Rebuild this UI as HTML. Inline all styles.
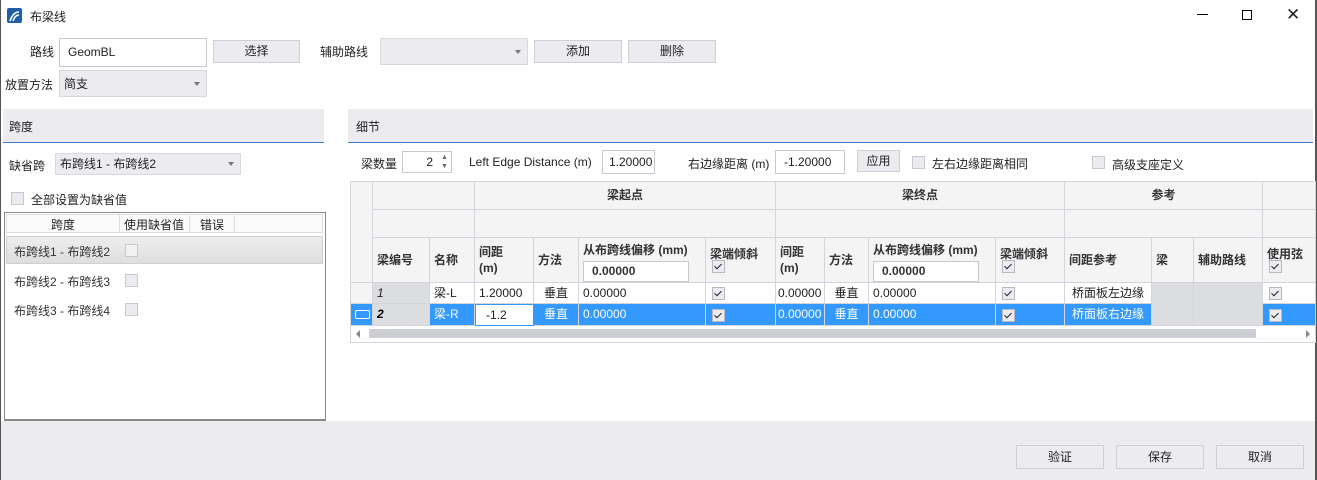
<!DOCTYPE html>
<html><head><meta charset="utf-8"><style>
*{box-sizing:border-box;margin:0;padding:0}
body{width:1317px;height:480px;overflow:hidden;background:#fff;font-family:"Liberation Sans","Noto Sans CJK SC",sans-serif;font-size:12px;color:#222;position:relative}
.a{position:absolute}
.btn{position:absolute;background:#ecebf0;border:1px solid #cfcfd8;text-align:center;color:#222}
.inp{position:absolute;background:#fff;border:1px solid #c8c8d0;padding-left:8px}
.cmb{position:absolute;background:#ecebf0;border:1px solid #d8d8de;padding-left:4px}
.cmb:after{content:"";position:absolute;right:6px;top:50%;margin-top:-2px;border-left:3px solid transparent;border-right:3px solid transparent;border-top:4px solid #777}
.cb{position:absolute;width:13px;height:13px;background:#ecebf0;border:1px solid #c8c8d0}
.ck{position:absolute;width:13px;height:13px;background:#ecebf0;border:1px solid #b8b8c4}
.ck:after{content:"";position:absolute;left:3px;top:1px;width:3px;height:6px;border:solid #222;border-width:0 1.5px 1.5px 0;transform:rotate(45deg)}
.c{position:absolute;border-right:1px solid #d4d4dc;border-bottom:1px solid #d4d4dc;padding:0 4px;white-space:nowrap;overflow:hidden}
.h{background:#f4f4f4;font-weight:bold;color:#333}
.sel{background:#3399ff;color:#fff}
.g{background:#dcdde0}
</style></head><body>
<div class="a" style="left:0;top:0;width:1px;height:480px;background:#555"></div>
<div class="a" style="left:1315px;top:0;width:2px;height:480px;background:#555"></div>
<div class="a" style="left:7px;top:8px;width:15px;height:15px;background:#1f5fa8;border-radius:2px"><svg width="15" height="15"><path d="M3 13 Q6 4 12 4 M6 13 Q8 7 12 7" stroke="#fff" stroke-width="1.6" fill="none"/></svg></div>
<div class="a" style="left:30px;top:8px">布梁线</div>
<div class="a" style="left:1197px;top:14px;width:11px;height:1px;background:#000"></div>
<div class="a" style="left:1242px;top:10px;width:10px;height:10px;border:1px solid #000"></div>
<div class="a" style="left:1286px;top:7px;font-size:17px;line-height:16px">✕</div>

<div class="a" style="left:30px;top:43px">路线</div>
<div class="inp" style="left:59px;top:38px;width:148px;height:29px;line-height:27px">GeomBL</div>
<div class="btn" style="left:213px;top:40px;width:87px;height:23px;line-height:21px">选择</div>
<div class="a" style="left:320px;top:43px">辅助路线</div>
<div class="cmb" style="left:380px;top:38px;width:148px;height:27px"></div>
<div class="btn" style="left:534px;top:40px;width:88px;height:23px;line-height:21px">添加</div>
<div class="btn" style="left:628px;top:40px;width:88px;height:23px;line-height:21px">删除</div>
<div class="a" style="left:5px;top:76px">放置方法</div>
<div class="cmb" style="left:59px;top:70px;width:148px;height:27px;line-height:27px">简支</div>

<div class="a" style="left:3px;top:109px;width:321px;height:34px;background:#ecebf0;border-bottom:1px solid #3d7cc9;padding:9px 6px">跨度</div>
<div class="a" style="left:9px;top:157px">缺省跨</div>
<div class="cmb" style="left:55px;top:153px;width:186px;height:22px;line-height:20px">布跨线1 - 布跨线2</div>
<div class="cb" style="left:11px;top:192px"></div>
<div class="a" style="left:31px;top:191px">全部设置为缺省值</div>
<div class="a" style="left:4px;top:212px;width:322px;height:209px;border:1px solid #888;border-bottom:2px solid #888;background:#fff"></div>
<div class="a" style="left:6px;top:214px;width:317px;height:19px;border:1px solid #ddd;background:#fbfbfb"></div>
<div class="a" style="left:6px;top:216px;width:114px;text-align:center">跨度</div>
<div class="a" style="left:119px;top:214px;width:1px;height:19px;background:#ddd"></div>
<div class="a" style="left:124px;top:216px">使用缺省值</div>
<div class="a" style="left:189px;top:214px;width:1px;height:19px;background:#ddd"></div>
<div class="a" style="left:200px;top:216px">错误</div>
<div class="a" style="left:234px;top:214px;width:1px;height:19px;background:#ddd"></div>
<div class="a" style="left:6px;top:236px;width:317px;height:28px;background:linear-gradient(#eee,#dedede);border:1px solid #d0d0d0"></div>
<div class="a" style="left:14px;top:243px;color:#333">布跨线1 - 布跨线2</div>
<div class="cb" style="left:125px;top:244px;background:#f2f2f2"></div>
<div class="a" style="left:14px;top:273px;color:#333">布跨线2 - 布跨线3</div>
<div class="cb" style="left:125px;top:274px"></div>
<div class="a" style="left:14px;top:302px;color:#333">布跨线3 - 布跨线4</div>
<div class="cb" style="left:125px;top:303px"></div>

<div class="a" style="left:348px;top:109px;width:965px;height:34px;background:#ecebf0;border-bottom:1px solid #3d7cc9;padding:9px 8px">细节</div>
<div class="a" style="left:361px;top:155px">梁数量</div>
<div class="inp" style="left:402px;top:151px;width:50px;height:22px;text-align:right;padding-right:18px;line-height:20px">2</div>
<div class="a" style="left:441px;top:153px;font-size:7px;line-height:9px;color:#666">▲<br>▼</div>
<div class="a" style="left:469px;top:155px">Left Edge Distance (m)</div>
<div class="inp" style="left:602px;top:150px;width:53px;height:24px;line-height:22px;padding-left:6px">1.20000</div>
<div class="a" style="left:688px;top:155px">右边缘距离 (m)</div>
<div class="inp" style="left:775px;top:150px;width:70px;height:24px;line-height:22px">-1.20000</div>
<div class="btn" style="left:857px;top:150px;width:43px;height:22px;line-height:20px">应用</div>
<div class="cb" style="left:912px;top:156px"></div>
<div class="a" style="left:932px;top:155px">左右边缘距离相同</div>
<div class="cb" style="left:1092px;top:156px"></div>
<div class="a" style="left:1112px;top:156px">高级支座定义</div>

<div class="a" style="left:350px;top:181px;width:966px;height:162px;border:1px solid #d4d4dc;background:#fff;overflow:hidden">
<div class="c h" style="left:0;top:0;width:22px;height:101px"></div>
<div class="c h" style="left:22px;top:0;width:102px;height:28px"></div>
<div class="c h" style="left:22px;top:28px;width:102px;height:28px"></div>
<div class="c h" style="left:124px;top:0;width:301px;height:28px;text-align:center;line-height:27px">梁起点</div>
<div class="c h" style="left:124px;top:28px;width:301px;height:28px"></div>
<div class="c h" style="left:425px;top:0;width:289px;height:28px;text-align:center;line-height:27px">梁终点</div>
<div class="c h" style="left:425px;top:28px;width:289px;height:28px"></div>
<div class="c h" style="left:714px;top:0;width:198px;height:28px;text-align:center;line-height:27px">参考</div>
<div class="c h" style="left:714px;top:28px;width:198px;height:28px"></div>
<div class="c h" style="left:912px;top:0;width:60px;height:28px"></div>
<div class="c h" style="left:912px;top:28px;width:60px;height:28px"></div>

<div class="c h" style="left:22px;top:56px;width:57px;height:45px;line-height:45px">梁编号</div>
<div class="c h" style="left:79px;top:56px;width:45px;height:45px;line-height:45px">名称</div>
<div class="c h" style="left:124px;top:56px;width:59px;height:45px;padding-top:6px;line-height:16px">间距<br>(m)</div>
<div class="c h" style="left:183px;top:56px;width:45px;height:45px;line-height:45px">方法</div>
<div class="c h" style="left:228px;top:56px;width:127px;height:45px;padding-top:3px">从布跨线偏移 (mm)<div style="margin-top:3px;width:106px;height:21px;background:#fff;border:1px solid #c8c8d0;padding-left:8px;line-height:19px">0.00000</div></div>
<div class="c h" style="left:355px;top:56px;width:70px;height:45px;padding-top:7px">梁端倾斜</div>
<div class="ck" style="left:361px;top:78px"></div>
<div class="c h" style="left:425px;top:56px;width:49px;height:45px;padding-top:6px;line-height:16px">间距<br>(m)</div>
<div class="c h" style="left:474px;top:56px;width:44px;height:45px;line-height:45px">方法</div>
<div class="c h" style="left:518px;top:56px;width:127px;height:45px;padding-top:3px">从布跨线偏移 (mm)<div style="margin-top:3px;width:106px;height:21px;background:#fff;border:1px solid #c8c8d0;padding-left:8px;line-height:19px">0.00000</div></div>
<div class="c h" style="left:645px;top:56px;width:69px;height:45px;padding-top:7px">梁端倾斜</div>
<div class="ck" style="left:651px;top:78px"></div>
<div class="c h" style="left:714px;top:56px;width:87px;height:45px;line-height:45px">间距参考</div>
<div class="c h" style="left:801px;top:56px;width:42px;height:45px;line-height:45px">梁</div>
<div class="c h" style="left:843px;top:56px;width:69px;height:45px;line-height:45px">辅助路线</div>
<div class="c h" style="left:912px;top:56px;width:60px;height:45px;padding-top:7px">使用弦</div>
<div class="ck" style="left:918px;top:78px"></div>

<div class="c" style="left:0;top:101px;width:22px;height:21px;background:#f4f4f4"></div>
<div class="c g" style="left:22px;top:101px;width:57px;height:21px;line-height:20px;font-style:italic">1</div>
<div class="c" style="left:79px;top:101px;width:45px;height:21px;line-height:20px">梁-L</div>
<div class="c" style="left:124px;top:101px;width:59px;height:21px;line-height:20px">1.20000</div>
<div class="c" style="left:183px;top:101px;width:45px;height:21px;line-height:20px;text-align:center">垂直</div>
<div class="c" style="left:228px;top:101px;width:127px;height:21px;line-height:20px">0.00000</div>
<div class="c" style="left:355px;top:101px;width:70px;height:21px"></div><div class="ck" style="left:361px;top:105px"></div>
<div class="c" style="left:425px;top:101px;width:49px;height:21px;line-height:20px;padding:0 2px">0.00000</div>
<div class="c" style="left:474px;top:101px;width:44px;height:21px;line-height:20px;text-align:center">垂直</div>
<div class="c" style="left:518px;top:101px;width:127px;height:21px;line-height:20px">0.00000</div>
<div class="c" style="left:645px;top:101px;width:69px;height:21px"></div><div class="ck" style="left:651px;top:105px"></div>
<div class="c" style="left:714px;top:101px;width:87px;height:21px;line-height:20px;text-align:center">桥面板左边缘</div>
<div class="c g" style="left:801px;top:101px;width:42px;height:43px"></div>
<div class="c g" style="left:843px;top:101px;width:69px;height:43px"></div>
<div class="c" style="left:912px;top:101px;width:60px;height:21px"></div><div class="ck" style="left:918px;top:105px"></div>

<div class="c sel" style="left:0;top:122px;width:22px;height:22px"><div style="margin-top:6px;width:15px;height:9px;border:1px solid #fff;border-radius:2px"></div></div>
<div class="c g" style="left:22px;top:122px;width:57px;height:22px;line-height:21px;font-weight:bold;font-style:italic;color:#000">2</div>
<div class="c sel" style="left:79px;top:122px;width:45px;height:22px;line-height:21px">梁-R</div>
<div class="c" style="left:124px;top:122px;width:59px;height:22px;line-height:20px;border:1px solid #3399ff;padding-left:10px">-1.2</div>
<div class="c sel" style="left:183px;top:122px;width:45px;height:22px;line-height:21px;text-align:center">垂直</div>
<div class="c sel" style="left:228px;top:122px;width:127px;height:22px;line-height:21px">0.00000</div>
<div class="c sel" style="left:355px;top:122px;width:70px;height:22px"></div><div class="ck" style="left:361px;top:127px"></div>
<div class="c sel" style="left:425px;top:122px;width:49px;height:22px;line-height:21px;padding:0 2px">0.00000</div>
<div class="c sel" style="left:474px;top:122px;width:44px;height:22px;line-height:21px;text-align:center">垂直</div>
<div class="c sel" style="left:518px;top:122px;width:127px;height:22px;line-height:21px">0.00000</div>
<div class="c sel" style="left:645px;top:122px;width:69px;height:22px"></div><div class="ck" style="left:651px;top:127px"></div>
<div class="c sel" style="left:714px;top:122px;width:87px;height:22px;line-height:21px;text-align:center">桥面板右边缘</div>
<div class="c sel" style="left:912px;top:122px;width:60px;height:22px"></div><div class="ck" style="left:918px;top:127px"></div>

<div class="a" style="left:0;top:144px;width:966px;height:17px;background:#fff"></div>
<div class="a" style="left:5px;top:148px;border-top:4px solid transparent;border-bottom:4px solid transparent;border-right:4px solid #888"></div>
<div class="a" style="left:18px;top:147px;width:887px;height:9px;background:#cdcdd6"></div>
<div class="a" style="left:955px;top:148px;border-top:4px solid transparent;border-bottom:4px solid transparent;border-left:4px solid #888"></div>
</div>

<div class="a" style="left:1px;top:421px;width:1314px;height:59px;background:#ecebf0"></div>
<div class="btn" style="left:1016px;top:445px;width:88px;height:24px;line-height:22px">验证</div>
<div class="btn" style="left:1116px;top:445px;width:88px;height:24px;line-height:22px">保存</div>
<div class="btn" style="left:1216px;top:445px;width:88px;height:24px;line-height:22px">取消</div>
</body></html>
